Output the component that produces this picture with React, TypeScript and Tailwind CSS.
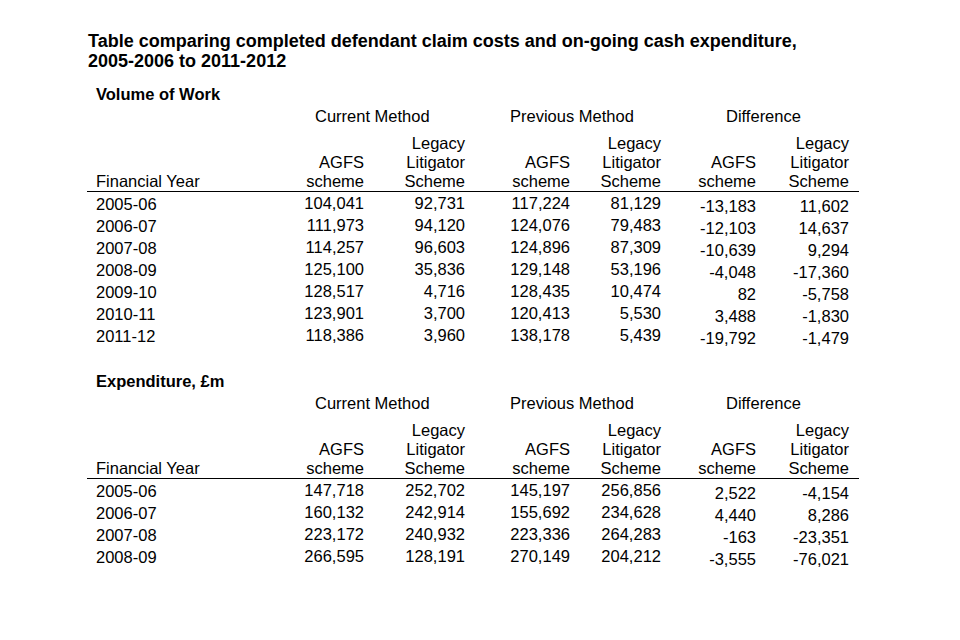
import React from "react";

type Row = [string, string, string, string, string, string, string];

const volume: Row[] = [
  ["2005-06", "104,041", "92,731", "117,224", "81,129", "-13,183", "11,602"],
  ["2006-07", "111,973", "94,120", "124,076", "79,483", "-12,103", "14,637"],
  ["2007-08", "114,257", "96,603", "124,896", "87,309", "-10,639", "9,294"],
  ["2008-09", "125,100", "35,836", "129,148", "53,196", "-4,048", "-17,360"],
  ["2009-10", "128,517", "4,716", "128,435", "10,474", "82", "-5,758"],
  ["2010-11", "123,901", "3,700", "120,413", "5,530", "3,488", "-1,830"],
  ["2011-12", "118,386", "3,960", "138,178", "5,439", "-19,792", "-1,479"],
];

const expenditure: Row[] = [
  ["2005-06", "147,718", "252,702", "145,197", "256,856", "2,522", "-4,154"],
  ["2006-07", "160,132", "242,914", "155,692", "234,628", "4,440", "8,286"],
  ["2007-08", "223,172", "240,932", "223,336", "264,283", "-163", "-23,351"],
  ["2008-09", "266,595", "128,191", "270,149", "204,212", "-3,555", "-76,021"],
];

const gridCols = "grid grid-cols-[177px_100px_101px_105px_91px_95px_93px_10px]";

function Agfs() {
  return (
    <div className="flex flex-col justify-end text-right">
      <div>AGFS</div>
      <div>scheme</div>
    </div>
  );
}

function Legacy() {
  return (
    <div className="flex flex-col justify-end text-right">
      <div>Legacy</div>
      <div>Litigator</div>
      <div>Scheme</div>
    </div>
  );
}

function DataTable({ title, rows, gapBefore }: { title: string; rows: Row[]; gapBefore: string }) {
  return (
    <div className={gapBefore}>
      <div className="pl-[9px] font-bold text-[16.5px] leading-[22px]">{title}</div>
      <div className={`${gridCols} leading-[22px]`}>
        <div />
        <div className="col-span-2 pl-[51px]">Current Method</div>
        <div className="col-span-2 pl-[45px]">Previous Method</div>
        <div className="col-span-3 pl-[65px]">Difference</div>
      </div>
      <div className={`${gridCols} mt-[7px] leading-[19px] border-b border-black`}>
        <div className="flex flex-col justify-end pl-[9px]">Financial Year</div>
        <Agfs />
        <Legacy />
        <Agfs />
        <Legacy />
        <Agfs />
        <Legacy />
        <div />
      </div>
      <div className="pt-[1px]">
        {rows.map((r) => (
          <div key={r[0]} className={`${gridCols} h-[22px] leading-[22px]`}>
            <div className="pl-[9px]">{r[0]}</div>
            <div className="text-right leading-[20px]">{r[1]}</div>
            <div className="text-right leading-[20px]">{r[2]}</div>
            <div className="text-right leading-[20px]">{r[3]}</div>
            <div className="text-right leading-[20px]">{r[4]}</div>
            <div className="text-right pt-[2px] leading-[22px]">{r[5]}</div>
            <div className="text-right pt-[2px] leading-[22px]">{r[6]}</div>
            <div />
          </div>
        ))}
      </div>
    </div>
  );
}

export default function App() {
  return (
    <div className="w-[960px] h-[640px] bg-white text-black font-['Liberation_Sans',Arial,sans-serif] text-[16.5px]">
      <div className="pt-[31px] pl-[88px] font-bold text-[18px] leading-[20px]">
        <div>Table comparing completed defendant claim costs and on-going cash expenditure,</div>
        <div>2005-2006 to 2011-2012</div>
      </div>
      <div className="ml-[87px] w-[772px]">
        <DataTable title="Volume of Work" rows={volume} gapBefore="mt-[12px]" />
        <DataTable title="Expenditure, £m" rows={expenditure} gapBefore="mt-[23px]" />
      </div>
    </div>
  );
}
